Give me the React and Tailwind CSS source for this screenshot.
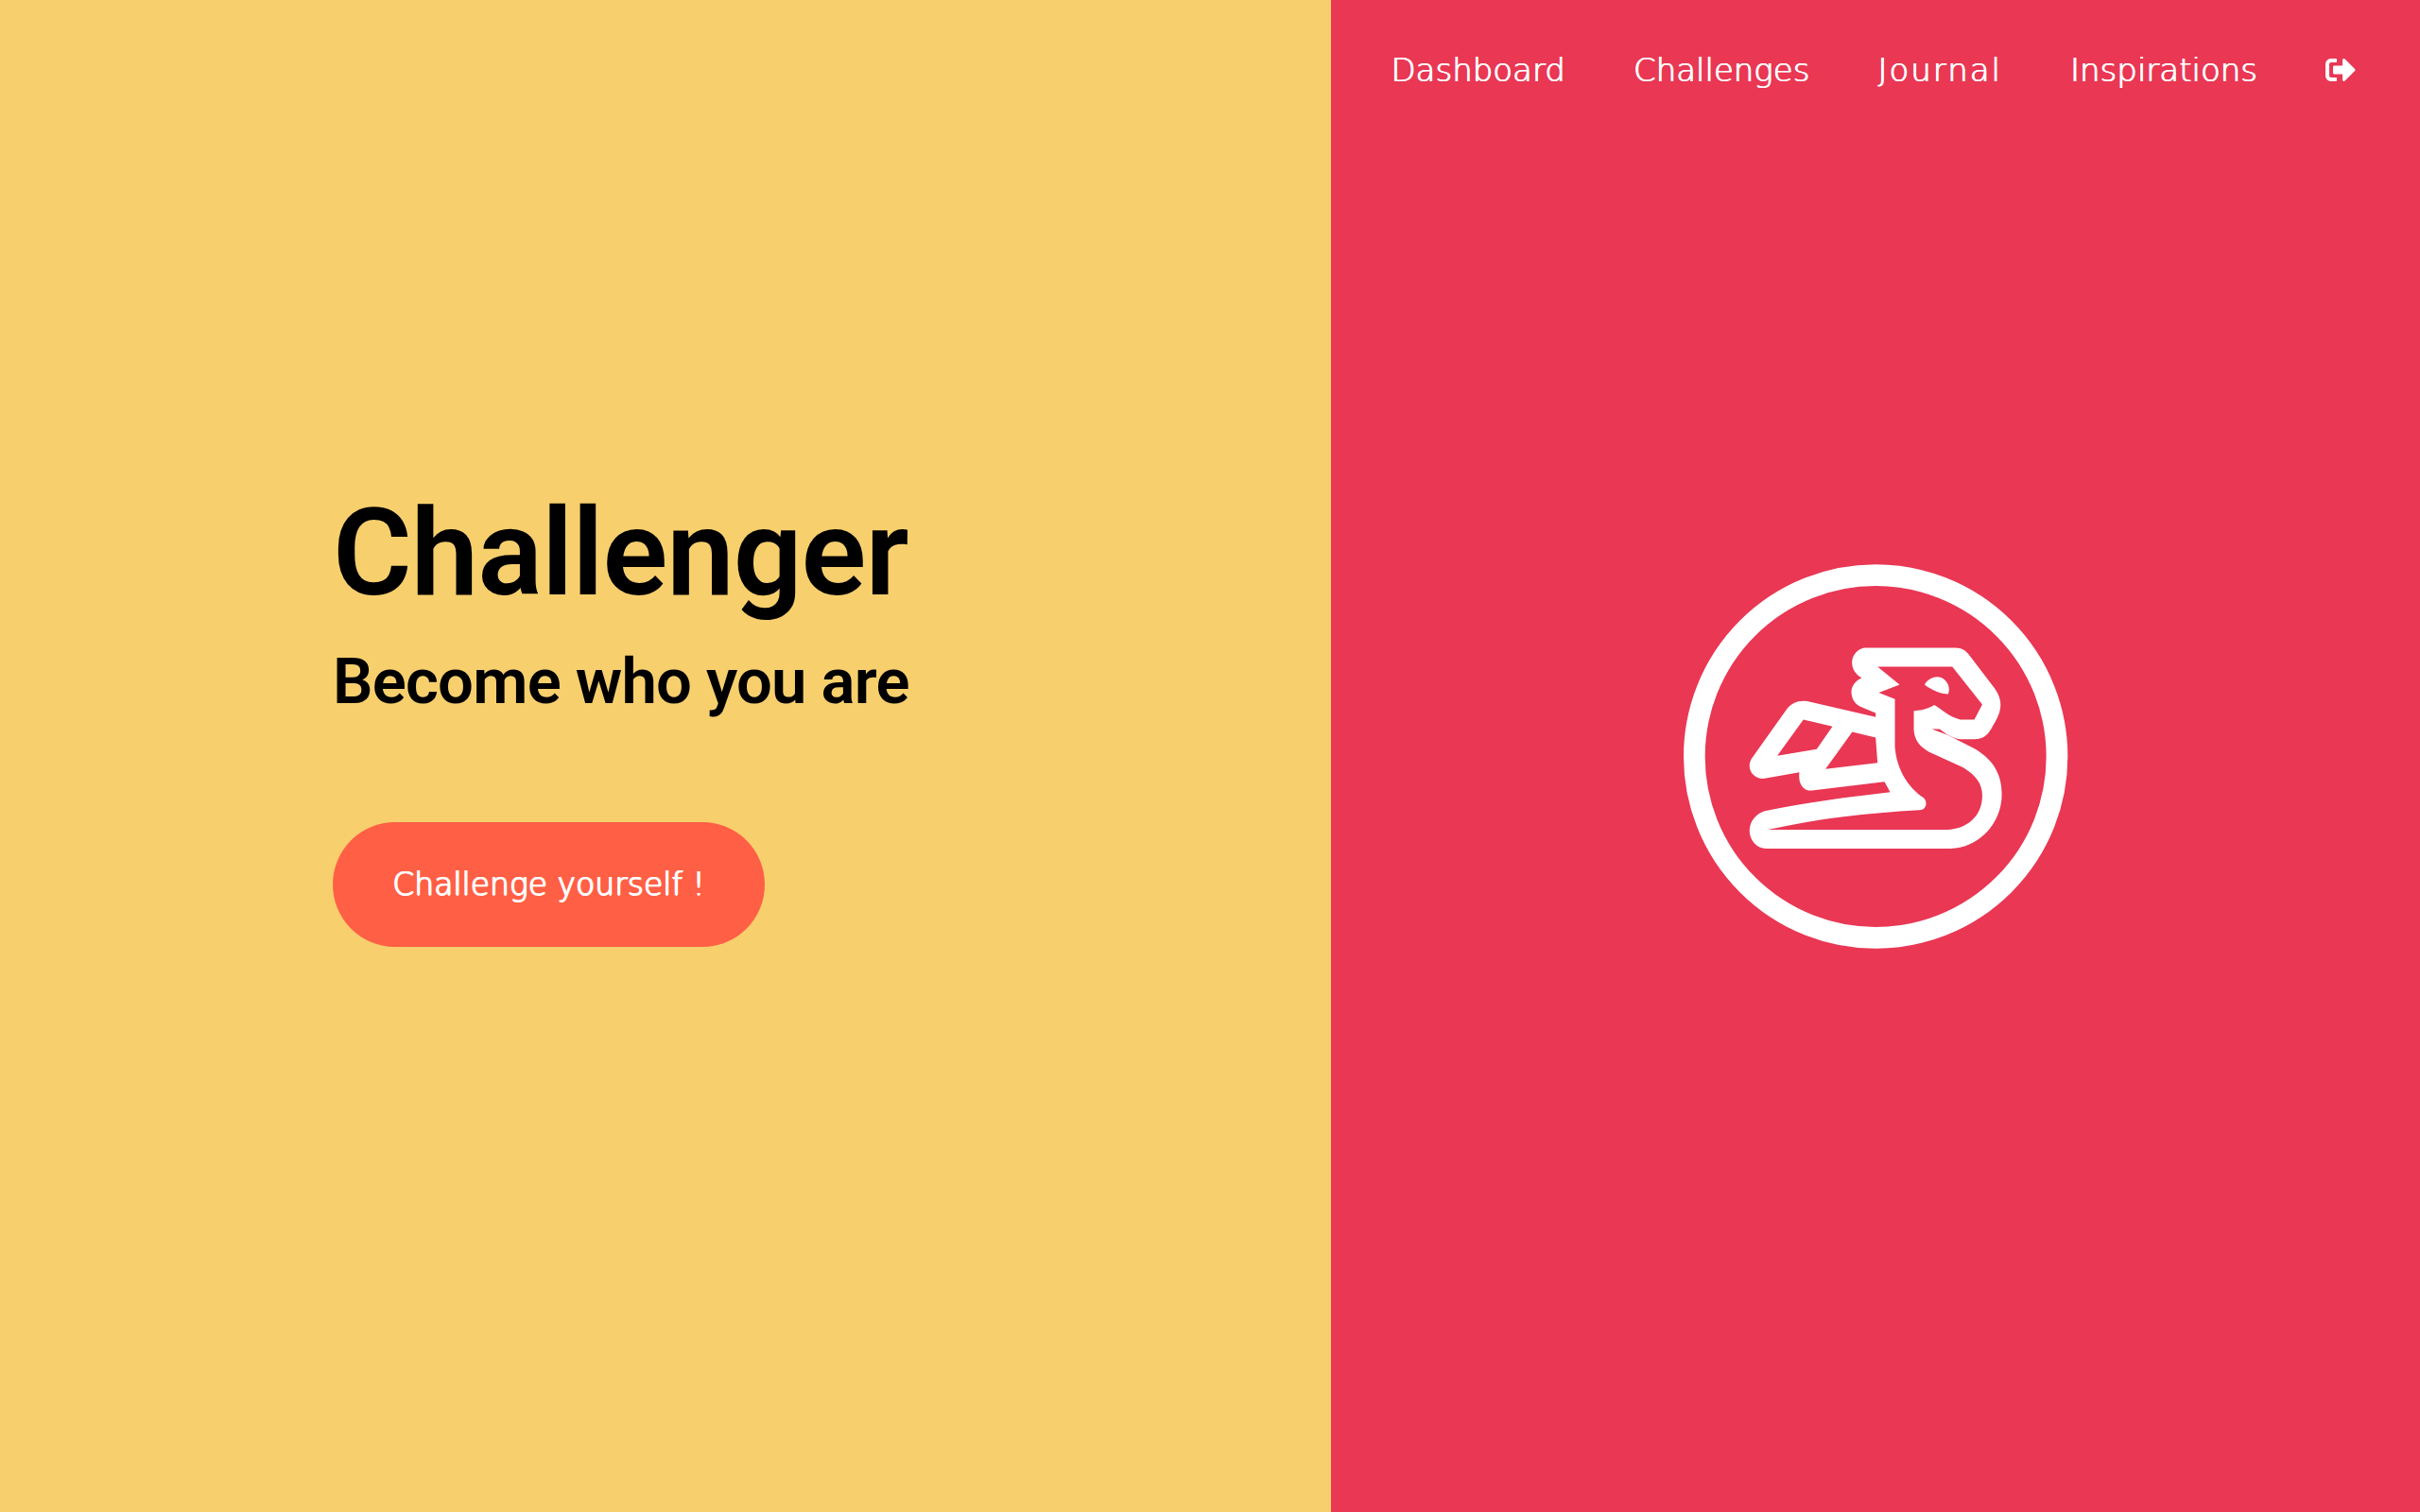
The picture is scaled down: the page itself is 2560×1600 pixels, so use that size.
import React from "react";
import { FaSignOutAlt } from "react-icons/fa";

const DRAGON =
  "M640 315 L925 315 C945 315 960 325 970 340 L1050 445 C1075 480 1075 515 1045 560 C1030 590 1015 605 985 605 L940 605 C915 603 890 585 875 573 L850 573 L900 592 L980 632 C1040 665 1072 710 1072 780 C1072 880 990 952 910 952 L325 952 C295 952 272 925 272 895 C272 865 295 840 320 833 C450 805 590 788 718 773 L700 740 L470 768 C445 770 425 750 430 710 L320 730 C295 733 272 715 272 690 C272 675 280 665 285 658 L390 510 C405 490 430 480 455 485 L672 535 L672 522 L625 503 C605 495 595 475 595 455 C595 435 610 418 628 411 C605 398 597 380 597 362 C597 335 620 315 640 315 Z " +
  "M678 375 L915 375 L1010 495 L985 543 L940 543 C905 535 880 510 858 497 C840 510 810 515 793 515 L793 575 C795 610 815 630 840 645 L950 695 C990 720 1010 745 1010 785 C1010 850 960 890 900 892 L330 892 C500 855 640 840 810 830 C835 830 838 800 822 790 C780 760 740 710 733 630 L733 478 L682 458 L748 432 Z " +
  "M827 432 C840 410 865 403 880 410 C900 420 910 440 902 462 C880 462 850 450 827 432 Z " +
  "M443 543 L535 565 L485 637 L360 658 Z " +
  "M598 582 L672 600 L678 680 L513 700 Z";

function Logo() {
  return (
    <svg viewBox="63 50 1220 1220" className="h-[407px] w-[407px]" aria-label="Challenger logo">
      <circle cx="672" cy="660" r="575" fill="none" stroke="#fff" strokeWidth="68" />
      <path d={DRAGON} fill="#fff" fillRule="evenodd" />
    </svg>
  );
}

export default function App() {
  return (
    <div className="flex h-[1600px] w-full overflow-hidden">
      <section className="flex w-[55%] flex-col justify-center bg-[#F7CF6D] pb-[88px] pl-[352px]">
        <h1 className="whitespace-nowrap font-['Roboto',sans-serif] text-[128px] leading-[150px] font-semibold tracking-[-1px] text-black">
          Challenger
        </h1>
        <h2 className="mt-[21px] whitespace-nowrap font-['Roboto',sans-serif] text-[67px] leading-[80px] font-semibold tracking-[-0.8px] text-black">
          Become who you are
        </h2>
        <button className="mt-[109px] flex h-[132px] w-[457px] items-center justify-center rounded-[66px] bg-[#FF5F45] font-['DejaVu_Sans',sans-serif] text-[33px] font-light whitespace-nowrap text-white [text-shadow:0.8px_0_0_white,-0.8px_0_0_white,0_0.6px_0_white]">
          Challenge yourself !
        </button>
      </section>
      <section className="relative flex w-[45%] items-center justify-center bg-[#E93754]">
        <nav className="absolute top-0 right-0 flex h-[148px] items-center gap-[72px] pr-[68px] font-['DejaVu_Sans',sans-serif] text-[34px] font-light text-white [text-shadow:0.5px_0_0_white,-0.5px_0_0_white]">
          <a href="#" className="leading-none">Dashboard</a>
          <a href="#" className="leading-none">Challenges</a>
          <a href="#" className="leading-none tracking-[2px]">Journal</a>
          <a href="#" className="leading-none">Inspirations</a>
          <a href="#" aria-label="Sign out"><FaSignOutAlt className="h-[32px] w-[32px]" /></a>
        </nav>
        <Logo />
      </section>
    </div>
  );
}
